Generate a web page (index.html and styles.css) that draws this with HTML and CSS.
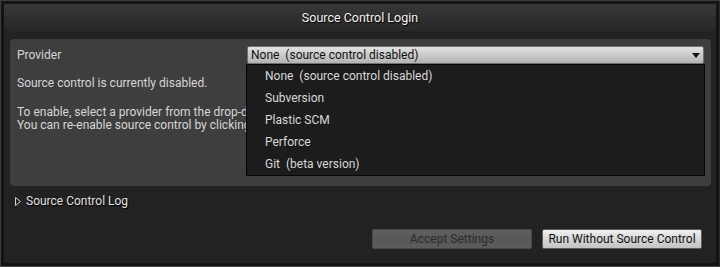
FILE: index.html
```html
<!DOCTYPE html>
<html lang="en">
<head>
    <meta charset="UTF-8">
    <meta name="viewport" content="width=device-width, initial-scale=1.0">
    <title>Source Control Login</title>
    <link rel="stylesheet" href="styles.css">
</head>
<body>
    <div class="window">
        <div class="titlebar">Source Control Login</div>
        <div class="content">
            <div class="panel">
                <div class="provider-row">
                    <span class="label">Provider</span>
                    <div class="combo">
                        <span>None&nbsp; (source control disabled)</span>
                        <span class="arrow"></span>
                        <ul class="menu">
                            <li>None&nbsp; (source control disabled)</li>
                            <li>Subversion</li>
                            <li>Plastic SCM</li>
                            <li>Perforce</li>
                            <li>Git&nbsp; (beta version)</li>
                        </ul>
                    </div>
                </div>
                <p class="status">Source control is currently disabled.</p>
                <!-- the open menu hides the rest of these lines -->
                <p class="hint">
                    <span>To enable, select a provider from the drop-down box above and enter your credentials.</span>
                    <span>You can re-enable source control by clicking on the source control icon in the toolbar.</span>
                </p>
            </div>
            <div class="log-toggle">
                <svg class="triangle" width="6" height="9" viewBox="0 0 6 9">
                    <path d="M0.5 0.5 L5.5 4.5 L0.5 8.5 Z" fill="none" stroke="#d4d4d4" stroke-width="1"/>
                </svg>
                <span>Source Control Log</span>
            </div>
            <div class="buttons">
                <button class="btn btn-disabled" disabled>Accept Settings</button>
                <button class="btn">Run Without Source Control</button>
            </div>
        </div>
    </div>
</body>
</html>
```

FILE: styles.css
```css
html, body {
    margin: 0;
    padding: 0;
    background: #3a3a3a;
}
body {
    font-family: Roboto, "Liberation Sans", sans-serif;
    font-size: 12px;
    color: #d6d6d6;
}
.window {
    width: 720px;
    height: 267px;
    box-sizing: border-box;
    border-top: 1px solid #3c3c3c;
    border-left: 1px solid #3c3c3c;
    border-right: 1px solid #2a2a2a;
    border-bottom: 1px solid #4a4a4a;
    background: #141414;
    padding: 3px;
    display: flex;
    flex-direction: column;
}
.titlebar {
    height: 27px;
    flex-shrink: 0;
    background: linear-gradient(#383838, #2d2d2d 60%, #272727);
    color: #f2f2f2;
    font-size: 12.5px;
    text-align: center;
    line-height: 27px;
    text-shadow: 1px 1px 1px #000;
}
.content {
    flex: 1;
    background: #222222;
    padding: 8px 5px 0 6px;
    display: flex;
    flex-direction: column;
}
.panel {
    background: #3e3e3e;
    border-radius: 4px;
    height: 147px;
    box-sizing: border-box;
    padding: 7px 7px 0 6px;
}
.provider-row {
    display: grid;
    grid-template-columns: 231px 1fr;
    align-items: center;
    height: 18px;
}
.label {
    padding-left: 1px;
}
.combo {
    position: relative;
    height: 18px;
    box-sizing: border-box;
    border: 1px solid #707070;
    border-radius: 2px;
    background: linear-gradient(#e2e2e2, #c8c8c8 55%, #b4b4b4);
    color: #111;
    padding-left: 3px;
    line-height: 16px;
    display: flex;
    justify-content: space-between;
    align-items: center;
}
.arrow {
    width: 0;
    height: 0;
    margin-right: 3px;
    border-left: 4px solid transparent;
    border-right: 4px solid transparent;
    border-top: 5px solid #111;
}
.menu {
    position: absolute;
    top: 17px;
    left: -2px;
    right: -2px;
    margin: 0;
    padding: 0;
    list-style: none;
    background: #1c1c1c;
    border: 1px solid #050505;
    color: #d8d8d8;
    z-index: 2;
}
.menu li {
    height: 22px;
    line-height: 22px;
    padding-left: 18px;
}
.status {
    margin: 12px 0 0 1px;
}
.hint {
    margin: 16px 0 0 1px;
    line-height: 13px;
    width: 229px;
    overflow: hidden;
    white-space: nowrap;
}
.hint span {
    display: block;
}
.log-toggle {
    display: flex;
    align-items: center;
    gap: 5px;
    margin: 8px 0 0 5px;
    color: #e0e0e0;
    text-shadow: 1px 1px 1px #000;
    height: 14px;
}
.triangle {
    flex-shrink: 0;
}
.buttons {
    display: flex;
    justify-content: flex-end;
    gap: 10px;
    margin-top: 21px;
    padding-right: 9px;
}
.btn {
    width: 160px;
    height: 20px;
    font-family: Roboto, "Liberation Sans", sans-serif;
    font-size: 12px;
    border: 1px solid #5e5e5e;
    border-radius: 2px;
    background: linear-gradient(#f0f0f0, #d2d2d2 60%, #c4c4c4);
    color: #111;
    padding: 0;
}
.btn-disabled {
    background: linear-gradient(#606060, #585858 50%, #5c5c5c);
    border-color: #4a4a4a;
    color: #2c2c2c;
}
```
